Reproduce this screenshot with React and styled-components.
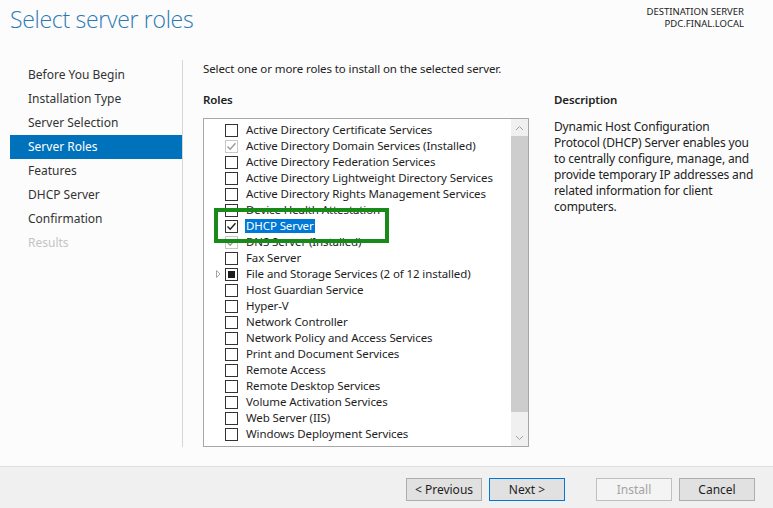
import React from 'react'
import styled, { createGlobalStyle } from 'styled-components'

const GlobalStyle = createGlobalStyle`
  html, body {
    margin: 0;
    padding: 0;
    background: #fcfcfc;
  }
  body {
    font-family: "Noto Sans", "Open Sans", sans-serif;
    font-size: 11.5px;
    letter-spacing: -0.1px;
    color: #1e1e1e;
  }
`

const steps = [
  { label: 'Before You Begin' },
  { label: 'Installation Type' },
  { label: 'Server Selection' },
  { label: 'Server Roles', active: true },
  { label: 'Features' },
  { label: 'DHCP Server' },
  { label: 'Confirmation' },
  { label: 'Results', disabled: true },
]

// state: empty | installed | checked | partial
const roles = [
  { name: 'Active Directory Certificate Services' },
  { name: 'Active Directory Domain Services (Installed)', state: 'installed' },
  { name: 'Active Directory Federation Services' },
  { name: 'Active Directory Lightweight Directory Services' },
  { name: 'Active Directory Rights Management Services' },
  { name: 'Device Health Attestation' },
  { name: 'DHCP Server', state: 'checked', selected: true },
  { name: 'DNS Server (Installed)', state: 'installed' },
  { name: 'Fax Server' },
  { name: 'File and Storage Services (2 of 12 installed)', state: 'partial', expandable: true },
  { name: 'Host Guardian Service' },
  { name: 'Hyper-V' },
  { name: 'Network Controller' },
  { name: 'Network Policy and Access Services' },
  { name: 'Print and Document Services' },
  { name: 'Remote Access' },
  { name: 'Remote Desktop Services' },
  { name: 'Volume Activation Services' },
  { name: 'Web Server (IIS)' },
  { name: 'Windows Deployment Services' },
]

const descLines = [
  'Dynamic Host Configuration',
  'Protocol (DHCP) Server enables you',
  'to centrally configure, manage, and',
  'provide temporary IP addresses and',
  'related information for client',
  'computers.',
]

const Window = styled.div`
  width: 773px;
  height: 508px;
  display: flex;
  flex-direction: column;
  overflow: hidden;
`

const Header = styled.div`
  display: flex;
  justify-content: space-between;
  align-items: flex-start;
  height: 60px;
  padding: 0 29px 0 10px;
`

const Title = styled.h1`
  margin: 3px 0 0;
  font-family: "Open Sans", "Noto Sans", sans-serif;
  font-weight: 300;
  font-size: 23px;
  letter-spacing: -0.3px;
  color: #2a79b5;
`

const Destination = styled.div`
  margin-top: 6px;
  text-align: right;
  font-size: 9.5px;
  letter-spacing: 0;
  line-height: 12px;
  color: #222;
`

const Body = styled.div`
  flex: 1;
  display: flex;
  min-height: 0;
`

const Nav = styled.nav`
  width: 172px;
  margin: 0 0 19px 10px;
  padding-top: 3px;
  border-right: 1px solid #d6d6d6;
  display: flex;
  flex-direction: column;
`

const NavItem = styled.div`
  height: 24px;
  line-height: 24px;
  padding-left: 18px;
  font-size: 12px;
  letter-spacing: 0;
  color: ${p => (p.$active ? '#fff' : p.$disabled ? '#c4c4c4' : '#333')};
  background: ${p => (p.$active ? '#0072bc' : 'transparent')};
`

const Main = styled.div`
  flex: 1;
  display: flex;
  flex-direction: column;
  padding: 2px 0 0 20px;
`

const Intro = styled.div`
  line-height: 14px;
  color: #222;
`

const Columns = styled.div`
  display: flex;
  margin-top: 17px;
`

const RolesCol = styled.div`
  width: 326px;
  display: flex;
  flex-direction: column;
`

const SectionLabel = styled.div`
  font-weight: 600;
  color: #222;
  line-height: 14px;
  height: ${p => p.$height || 18}px;
`

const ListBox = styled.div`
  position: relative;
  height: 329px;
  box-sizing: border-box;
  border: 1px solid #a7a7a7;
  background: #fff;
  display: flex;
`

const Rows = styled.div`
  flex: 1;
  padding-top: 3px;
`

const Row = styled.div`
  height: 16px;
  display: flex;
  align-items: center;
  padding-left: 7px;
  white-space: nowrap;
  color: #1e1e1e;
`

const Expander = styled.span`
  width: 14px;
  display: flex;
  justify-content: center;
  svg { display: block; }
`

const Box = styled.span`
  width: 13px;
  height: 13px;
  box-sizing: border-box;
  border: 1px solid ${p => (p.$state === 'installed' ? '#c8c8c8' : '#333')};
  background: #fff;
  display: flex;
  align-items: center;
  justify-content: center;
  svg { display: block; }
`

const PartialFill = styled.span`
  width: 7px;
  height: 7px;
  background: #1e1e1e;
`

const RoleText = styled.span`
  margin-left: 7px;
  padding: 0 1px;
  line-height: 14px;
  background: ${p => (p.$selected ? '#0078d7' : 'transparent')};
  color: ${p => (p.$selected ? '#fff' : 'inherit')};
`

const Scrollbar = styled.div`
  width: 17px;
  background: #f0f0f0;
  display: flex;
  flex-direction: column;
`

const ScrollArrow = styled.div`
  height: 17px;
  display: flex;
  align-items: center;
  justify-content: center;
`

const Thumb = styled.div`
  flex: 1;
  background: #cdcdcd;
  margin-bottom: 17px;
`

const Highlight = styled.div`
  position: absolute;
  left: 10px;
  top: 89px;
  width: 175px;
  height: 35px;
  box-sizing: border-box;
  border: 4px solid #178a17;
  pointer-events: none;
`

const DescCol = styled.div`
  margin-left: 25px;
  width: 205px;
`

const DescText = styled.p`
  margin: 1px 0 0;
  font-size: 12px;
  letter-spacing: -0.15px;
  line-height: 16px;
  color: #222;
  white-space: nowrap;
`

const Footer = styled.div`
  height: 42px;
  box-sizing: border-box;
  border-top: 1px solid #dfdfdf;
  background: #f0f0f0;
  display: flex;
  align-items: flex-start;
  justify-content: flex-end;
  padding: 11px 18px 0 0;
`

const ButtonGroup = styled.div`
  display: flex;
  gap: 7px;
  margin-left: ${p => p.$gap || 0}px;
`

const Button = styled.button`
  width: 76px;
  height: 23px;
  box-sizing: border-box;
  font-family: inherit;
  font-size: 12px;
  padding: 0;
  border: 1px solid ${p => (p.$primary ? '#0078d7' : p.disabled ? '#bfbfbf' : '#adadad')};
  background: ${p => (p.disabled ? '#f4f4f4' : '#e1e1e1')};
  color: ${p => (p.disabled ? '#a3a3a3' : '#1e1e1e')};
`

const Check = ({ color }) => (
  <svg width="11" height="11" viewBox="0 0 11 11">
    <path d="M1.5 5.5 L4.2 8.3 L9.5 2.2" fill="none" stroke={color} strokeWidth="1.4" />
  </svg>
)

const CheckBox = ({ state }) => (
  <Box $state={state}>
    {state === 'installed' && <Check color="#9a9a9a" />}
    {state === 'checked' && <Check color="#1e1e1e" />}
    {state === 'partial' && <PartialFill />}
  </Box>
)

const Chevron = ({ up }) => (
  <svg width="9" height="6" viewBox="0 0 9 6">
    <path d={up ? 'M1 5 L4.5 1.5 L8 5' : 'M1 1 L4.5 4.5 L8 1'} fill="none" stroke="#a0a0a0" strokeWidth="1" />
  </svg>
)

const App = () => (
  <>
    <GlobalStyle />
    <Window>
      <Header>
        <Title>Select server roles</Title>
        <Destination>
          <div>DESTINATION SERVER</div>
          <div>PDC.FINAL.LOCAL</div>
        </Destination>
      </Header>
      <Body>
        <Nav>
          {steps.map(s => (
            <NavItem key={s.label} $active={s.active} $disabled={s.disabled}>
              {s.label}
            </NavItem>
          ))}
        </Nav>
        <Main>
          <Intro>Select one or more roles to install on the selected server.</Intro>
          <Columns>
            <RolesCol>
              <SectionLabel $height={25}>Roles</SectionLabel>
              <ListBox>
                <Rows>
                  {roles.map(r => (
                    <Row key={r.name}>
                      <Expander>
                        {r.expandable && (
                          <svg width="5" height="8" viewBox="0 0 5 8">
                            <path d="M0.5 0.5 L4 4 L0.5 7.5 Z" fill="none" stroke="#a6a6a6" strokeWidth="1" />
                          </svg>
                        )}
                      </Expander>
                      <CheckBox state={r.state} />
                      <RoleText $selected={r.selected}>{r.name}</RoleText>
                    </Row>
                  ))}
                </Rows>
                <Scrollbar>
                  <ScrollArrow><Chevron up /></ScrollArrow>
                  <Thumb />
                  <ScrollArrow><Chevron /></ScrollArrow>
                </Scrollbar>
                <Highlight />
              </ListBox>
            </RolesCol>
            <DescCol>
              <SectionLabel $height={25}>Description</SectionLabel>
              <DescText>
                {descLines.map((line, i) => (
                  <React.Fragment key={i}>
                    {line}
                    {i < descLines.length - 1 && <br />}
                  </React.Fragment>
                ))}
              </DescText>
            </DescCol>
          </Columns>
        </Main>
      </Body>
      <Footer>
        <ButtonGroup>
          <Button>&lt; Previous</Button>
          <Button $primary>Next &gt;</Button>
        </ButtonGroup>
        <ButtonGroup $gap={31}>
          <Button disabled>Install</Button>
          <Button>Cancel</Button>
        </ButtonGroup>
      </Footer>
    </Window>
  </>
)

export default App
